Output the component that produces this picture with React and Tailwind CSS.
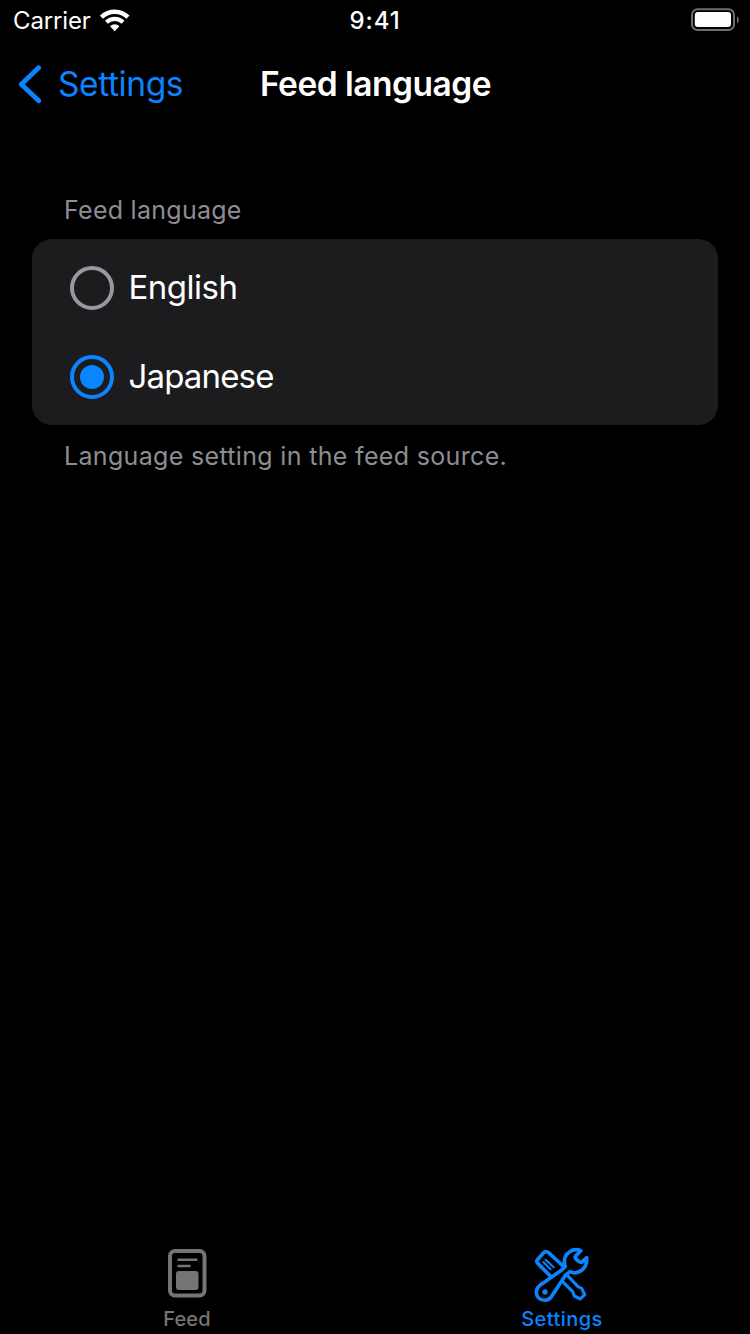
function StatusBar() {
  return (
    <div className="grid h-10 grid-cols-3 items-center pl-[13px] pr-[11px]">
      <div className="flex items-center gap-[9px] text-[24px] leading-[38px]">
        <span className="w-[78px] whitespace-nowrap pt-[2px] tracking-[-0.15px]">Carrier</span>
        <svg className="h-[23px] w-[30px]" viewBox="0 0 30 23" fill="none" stroke="white">
          <path d="M1.4 8.2C9 1 20.6 1 28 8.2" strokeWidth="4.4" />
          <path d="M6.4 13.2C11.2 8.7 18.4 8.7 23 13.2" strokeWidth="4.1" />
          <path d="M10 17.3C12.8 14.6 16.8 14.6 19.4 17.3L14.7 22.2Z" fill="white" stroke="none" />
        </svg>
      </div>
      <span className="pr-[2px] pt-[2px] text-center text-[24px] font-medium leading-[38px] tracking-[0.9px]">9:41</span>
      <svg className="h-[24px] w-[48px] justify-self-end" viewBox="0 0 48 24" fill="none">
        <rect x="1" y="1.3" width="42" height="20.7" rx="5.5" stroke="#6e6e6e" strokeWidth="2" />
        <rect x="3.8" y="4" width="36.2" height="15" rx="3" fill="white" />
        <path d="M46 8Q47.8 9.5 47.8 11.8T46 15.6Z" fill="#6e6e6e" />
      </svg>
    </div>
  );
}

function Radio({ label, checked }) {
  return (
    <div className="flex h-[89px] items-center gap-[14.5px] pl-[38px]">
      <span
        className={
          checked
            ? "flex size-11 items-center justify-center rounded-full border-4 border-[#0a84ff]"
            : "flex size-11 items-center justify-center rounded-full border-4 border-[#98989d]"
        }
      >
        {checked && <span className="size-6 rounded-full bg-[#0a84ff]" />}
      </span>
      <span
        className={
          checked
            ? "pb-[2px] text-[33px] leading-[44px] tracking-[-0.85px]"
            : "pb-[2px] text-[33px] leading-[44px] tracking-[-0.5px]"
        }
      >
        {label}
      </span>
    </div>
  );
}

function FeedIcon() {
  return (
    <svg className="h-[50px] w-[40px]" viewBox="0 0 40 50" fill="none">
      <rect x="3" y="3" width="34.5" height="44.5" rx="5" stroke="#757575" strokeWidth="4" />
      <path d="M11.5 11.7H29.5M11.5 18H22.5" stroke="#757575" strokeWidth="2.4" strokeLinecap="round" />
      <rect x="9" y="23" width="22.5" height="19" rx="3" fill="#757575" />
    </svg>
  );
}

function ToolsIcon() {
  return (
    <svg className="size-[57px]" viewBox="39 35 171 171" fill="none" stroke="#0a84ff" strokeWidth="11" strokeLinejoin="round" strokeLinecap="round">
      <path d="M94 128L54 88Q47 81 54 74L70 56Q77 48 86 55L129 95" />
      <path d="M70 83L92 105M77 76L101 99" strokeWidth="6" />
      <path d="M182 49C160 39 133 56 133 82C133 88 134 92 136 96L124 108L61 152C46 163 46 181 56 191C68 202 86 199 94 187L137 122L150 112C174 123 203 104 200 70L187 82Q181 86 175 80L168 74Q163 69 168 64Z" />
      <circle cx="75" cy="173" r="8" fill="#0a84ff" stroke="none" />
      <path d="M143 124L174 157L185 162L194 181L181 194L163 185L158 172L127 141" strokeWidth="9.5" />
    </svg>
  );
}

export default function App() {
  return (
    <div className="flex h-[1334px] w-[750px] flex-col bg-black font-['Inter',sans-serif] text-white">
      <StatusBar />
      <nav className="grid h-[88px] grid-cols-[250px_250px_250px] items-center">
        <div className="flex items-center gap-4 pl-[18px] text-[#0a84ff]">
          <svg className="h-[40px] w-[24px]" viewBox="0 0 24 40" fill="none">
            <path d="M20.7 3.8L3.3 20.3L20.7 36.8" stroke="currentColor" strokeWidth="4.8" strokeLinecap="round" strokeLinejoin="round" />
          </svg>
          <span className="text-[33.5px] leading-[50px] tracking-[-0.4px]">Settings</span>
        </div>
        <h1 className="whitespace-nowrap pl-px text-center text-[33.5px] font-semibold leading-[50px] tracking-[-0.5px]">Feed language</h1>
      </nav>
      <main className="flex flex-1 flex-col px-8 pt-[62px]">
        <h2 className="px-8 text-[25px] leading-[40px] tracking-[0.27px] text-[#8d8d93]">Feed language</h2>
        <div className="mt-[9px] h-[186px] rounded-[20px] bg-[#1c1c1e] pt-[4px]">
          <Radio label="English" />
          <Radio label="Japanese" checked />
        </div>
        <p className="mt-[11px] px-8 text-[25px] leading-[40px] tracking-[0.33px] text-[#8d8d93]">Language setting in the feed source.</p>
      </main>
      <footer className="grid h-[98px] grid-cols-2 text-[20px] font-medium leading-[24px]">
        <div className="flex flex-col items-center pr-px pt-[12px] text-[#757575]">
          <FeedIcon />
          <span className="mt-[9px] tracking-[0.2px]">Feed</span>
        </div>
        <div className="flex flex-col items-center pr-px pt-[10px] text-[#0a84ff]">
          <div className="pr-[2px]">
            <ToolsIcon />
          </div>
          <span className="mt-[4px] tracking-[0.45px]">Settings</span>
        </div>
      </footer>
    </div>
  );
}
